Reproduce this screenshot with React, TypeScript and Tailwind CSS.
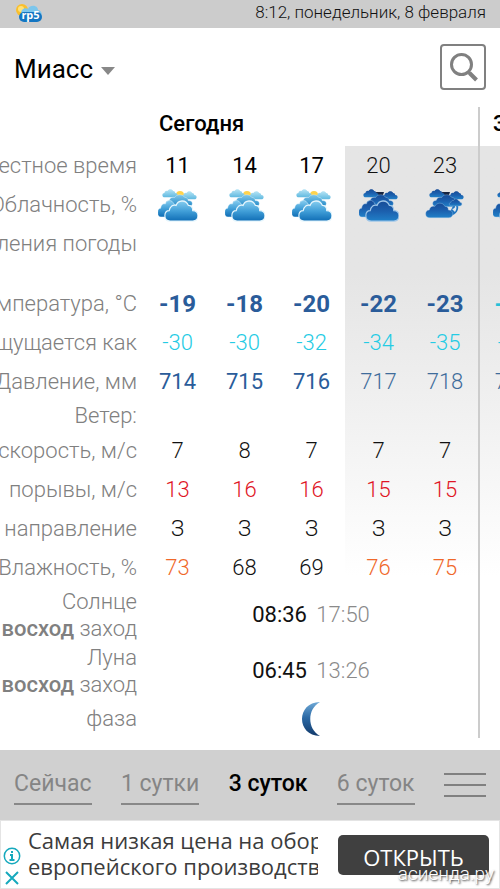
import React from "react";

type Tone = "black" | "bold" | "cyan" | "cyanBold" | "blue" | "slate" | "red" | "orange" | "medium";

const tones: Record<Tone, string> = {
  black: "text-[#111111]",
  medium: "text-black font-normal",
  bold: "text-[24px] text-[#2a5c9a] font-bold",
  cyanBold: "text-[24px] text-[#27c0d8] font-bold",
  cyan: "text-[#25cbe4] font-light",
  blue: "text-[#2a5c9a] font-normal",
  slate: "text-[#3f6c9b] font-light",
  red: "text-[#e01525] font-light",
  orange: "text-[#f0682a] font-light",
};

type Cell = [string, Tone];

const each = (values: string[], tone: Tone): Cell[] => values.map((v) => [v, tone]);

const hours = each(["11", "14", "17"], "medium").concat(each(["20", "23", "02"], "black"));
const temperature = each(["-19", "-18", "-20", "-22", "-23"], "bold").concat(each(["-24"], "cyanBold"));
const feels = each(["-30", "-30", "-32", "-34", "-35", "-35"], "cyan");
const pressure = each(["714", "715", "716"], "blue").concat(each(["717", "718", "719"], "slate"));
const speed = each(["7", "8", "7", "7", "7", ""], "black");
const gusts = each(["13", "16", "16", "15", "15", ""], "red");
const direction = each(["З", "З", "З", "З", "З", ""], "black");
const humidity: Cell[] = [
  ["73", "orange"],
  ["68", "black"],
  ["69", "black"],
  ["76", "orange"],
  ["75", "orange"],
  ["", "orange"],
];

const cloudPath =
  "M7 22C3 22 1 20 1 17C1 14 3 12 6 12C7 8 10 6 14 7C16 2 25 1 28 7C31 7 33 9 33 12C37 12 39 14 39 17C39 20 37 22 33 22Z";

function Clouds({ kind }: { kind: "day" | "night" | "clearing" }) {
  const night = kind !== "day";
  const back = night ? "url(#cloudNight)" : "url(#cloudPale)";
  const middle = night ? "url(#cloudNight)" : "url(#cloudMid)";
  const front = night ? "url(#cloudNight)" : "url(#cloudDay)";
  const edge = night ? "#9fc6e8" : "#e6f6fd";
  return (
    <svg viewBox="0 0 40 36" className="mx-auto block h-9 w-10" role="img" aria-label="Облачно">
      {night ? (
        <path d="M17 5h8l-2 6h-5z" fill="#172440" />
      ) : (
        <circle cx="22" cy="8" r="4" fill="#ffd34d" />
      )}
      <path d={cloudPath} transform="translate(4 1) scale(.4 .42)" fill={back} />
      <path d={cloudPath} transform="translate(23 3) scale(.4 .42)" fill={back} />
      <path d={cloudPath} transform="translate(7 6) scale(.7 .62)" fill={middle} stroke={edge} strokeWidth=".6" />
      {kind === "clearing" ? (
        <>
          <path d="M25 29C32 27 34 23 33 17L29 17L24 27Z" fill="#1f74bf" />
          <path d="M27 22Q31 21 30 18Q33 20 30 25Z" fill="#dfe8ef" />
          <path d={cloudPath} transform="translate(24 11) scale(.33 .36)" fill={front} stroke={edge} strokeWidth="1" />
          <path d={cloudPath} transform="translate(0 14) scale(.71 .76)" fill={front} stroke={edge} strokeWidth=".5" />
        </>
      ) : (
        <>
          <path d={cloudPath} transform="translate(-1 11) scale(.6 .86)" fill={front} stroke={edge} strokeWidth=".6" />
          <path d={cloudPath} transform="translate(6 11) scale(.87 1.05)" fill={front} stroke={edge} strokeWidth="1.3" />
        </>
      )}
    </svg>
  );
}

function Gradients() {
  return (
    <svg className="absolute h-0 w-0" aria-hidden="true">
      <defs>
        <linearGradient id="cloudPale" x1="0" y1="0" x2="0" y2="1">
          <stop offset="0" stopColor="#b8e5f5" />
          <stop offset="1" stopColor="#5fb9e0" />
        </linearGradient>
        <linearGradient id="cloudMid" x1="0" y1="0" x2="0" y2="1">
          <stop offset="0" stopColor="#7fc6e8" />
          <stop offset="1" stopColor="#2389c8" />
        </linearGradient>
        <linearGradient id="cloudDay" x1="0" y1="0" x2="0" y2="1">
          <stop offset="0" stopColor="#86cdef" />
          <stop offset=".5" stopColor="#419fd8" />
          <stop offset="1" stopColor="#0f6db5" />
        </linearGradient>
        <linearGradient id="cloudNight" x1="0" y1="0" x2="0" y2="1">
          <stop offset="0" stopColor="#174c97" />
          <stop offset=".5" stopColor="#1c5fad" />
          <stop offset="1" stopColor="#2080c8" />
        </linearGradient>
        <linearGradient id="moonBlue" x1="0" y1="0" x2="0" y2="1">
          <stop offset="0" stopColor="#6fa9d6" />
          <stop offset=".45" stopColor="#2c6aa6" />
          <stop offset="1" stopColor="#123a6b" />
        </linearGradient>
      </defs>
    </svg>
  );
}

function RowLabel({ children }: { children: React.ReactNode }) {
  return (
    <th scope="row" className="p-0 pr-[7px] font-light text-[#808080]">
      <div className="flex justify-end overflow-hidden whitespace-nowrap">
        <span>{children}</span>
      </div>
    </th>
  );
}

const nextDay = "border-l-2 border-[#cccccc]";

function Row({ label, cells }: { label: string; cells: Cell[] }) {
  return (
    <tr className="h-[39px]">
      <RowLabel>{label}</RowLabel>
      {cells.map(([text, tone], i) => (
        <td key={i} className={`p-0 text-center ${tones[tone]} ${i === 5 ? nextDay : ""}`}>
          {text}
        </td>
      ))}
    </tr>
  );
}

function RiseSet({ label, rise, set }: { label: string; rise: string; set: string }) {
  return (
    <tr className="h-14">
      <RowLabel>
        <span className="block text-right leading-[27px]">{label}</span>
        <span className="block leading-[27px]">
          <b className="font-medium">восход</b> заход
        </span>
      </RowLabel>
      <td colSpan={5} className="p-0 text-center text-[#111111]">
        <span className="font-normal">{rise}</span> <span className="ml-1 font-light text-[#8a8a8a]">{set}</span>
      </td>
      <td className={nextDay} />
    </tr>
  );
}

function Forecast() {
  return (
    <div className="overflow-hidden">
      <table className="w-[546px] table-fixed border-collapse text-[22px] leading-[28px] font-light">
        <colgroup>
          <col className="w-36" />
          <col span={6} />
        </colgroup>
        <thead>
          <tr className="h-[39px] text-left text-black">
            <td />
            <th scope="colgroup" colSpan={5} className="p-0 pb-[6px] pl-[15px] font-medium">
              Сегодня
            </th>
            <th scope="colgroup" className={`p-0 pb-[6px] pl-[13px] font-medium ${nextDay}`}>
              Завтра
            </th>
          </tr>
        </thead>
        <tbody className="bg-linear-to-b from-[#e5e5e5] from-30% to-white bg-[length:201px_430px] bg-right-top bg-no-repeat">
          <Row label="Местное время" cells={hours} />
          <tr className="h-[39px]">
            <RowLabel>Облачность, %</RowLabel>
            <td className="p-0"><Clouds kind="day" /></td>
            <td className="p-0"><Clouds kind="day" /></td>
            <td className="p-0"><Clouds kind="day" /></td>
            <td className="p-0"><Clouds kind="night" /></td>
            <td className="p-0"><Clouds kind="clearing" /></td>
            <td className={`p-0 ${nextDay}`}><Clouds kind="night" /></td>
          </tr>
          <tr className="h-[60px] align-top">
            <th scope="row" className="p-0 pt-[6px] pr-[7px] font-light text-[#808080]">
              <div className="flex justify-end overflow-hidden whitespace-nowrap">
                <span>Явления погоды</span>
              </div>
            </th>
            <td colSpan={5} />
            <td className={nextDay} />
          </tr>
          <Row label="Температура, °C" cells={temperature} />
          <Row label="Ощущается как" cells={feels} />
          <Row label="Давление, мм" cells={pressure} />
          <tr className="h-[30px]">
            <RowLabel>Ветер:</RowLabel>
            <td colSpan={5} />
            <td className={nextDay} />
          </tr>
          <Row label="скорость, м/с" cells={speed} />
          <Row label="порывы, м/с" cells={gusts} />
          <Row label="направление" cells={direction} />
          <Row label="Влажность, %" cells={humidity} />
          <RiseSet label="Солнце" rise="08:36" set="17:50" />
          <RiseSet label="Луна" rise="06:45" set="13:26" />
          <tr className="h-[39px]">
            <RowLabel>фаза</RowLabel>
            <td colSpan={5} className="p-0">
              <svg viewBox="0 0 20 36" className="mx-auto block h-9 w-5" role="img" aria-label="Убывающая луна">
                <path d="M19 1C-5 1-5 35 19 35C6 28 6 8 19 1Z" fill="url(#moonBlue)" />
              </svg>
            </td>
            <td className={nextDay} />
          </tr>
        </tbody>
      </table>
    </div>
  );
}

function Logo() {
  return (
    <svg viewBox="0 0 28 20" className="h-5 w-7" role="img" aria-label="rp5">
      <circle cx="7" cy="7" r="6" fill="#f9bf2d" />
      <circle cx="6" cy="6" r="3" fill="#ffe27a" />
      <path d="M7 12C4 6 11 4 13 6C15 1 23 2 23 7C28 8 27 13 25 14L8 14Z" fill="#7cc6ec" />
      <rect x="4" y="9" width="23" height="10" rx="5" fill="#1476c2" />
      <text x="15.500" y="16" textAnchor="middle" className="fill-white font-['Open_Sans',sans-serif] text-[11px] font-bold">
        rp5
      </text>
    </svg>
  );
}

const tabs = ["Сейчас", "1 сутки", "3 суток", "6 суток"];

export default function App() {
  return (
    <div className="relative flex min-h-screen flex-col overflow-hidden bg-white font-['Roboto',sans-serif]">
      <Gradients />
      <div className="flex h-7 items-center justify-between bg-[#cccccc] pr-[14px] pb-[2px] pl-[15px]">
        <Logo />
        <span className="text-[17px] font-light text-[#111111]">8:12, понедельник, 8 февраля</span>
      </div>

      <header className="flex items-center justify-between px-[14px] pt-4 pb-[17px]">
        <div className="flex items-center gap-2 pt-1">
          <select aria-label="Город" className="field-sizing-content appearance-none bg-transparent text-[26px] leading-9 text-black">
            <option>Миасс</option>
          </select>
          <svg viewBox="0 0 14 8" className="mt-1 h-2 w-[14px]" aria-hidden="true">
            <path d="M0 0h14L7 8z" fill="#888888" />
          </svg>
        </div>
        <button aria-label="Поиск" className="flex h-[46px] w-[46px] items-center justify-center rounded-[4px] border-2 border-[#808080]">
          <svg viewBox="0 0 30 30" className="h-[30px] w-[30px]" fill="none" stroke="#808080">
            <circle cx="13.500" cy="12.500" r="10" strokeWidth="3" />
            <path d="M20 19.500L23 22.500" strokeWidth="3" />
            <path d="M21.500 21L28.500 28" strokeWidth="4" />
          </svg>
        </button>
      </header>

      <main>
        <Forecast />
      </main>

      <nav className="mt-auto flex h-[70px] items-center justify-between bg-[#d0d0d0] px-[14px]">
        {tabs.map((tab) => (
          <button
            key={tab}
            className={
              tab === "3 суток"
                ? "border-b-2 border-transparent pt-1 pb-1 text-[23px] leading-[30px] font-medium text-black"
                : "border-b-2 border-[#888888] pt-1 pb-1 text-[23px] leading-[30px] text-[#858585]"
            }
          >
            {tab}
          </button>
        ))}
        <button aria-label="Меню" className="flex w-[42px] flex-col gap-[9px]">
          <span className="h-[2px] w-full bg-[#808080]" />
          <span className="h-[2px] w-full bg-[#808080]" />
          <span className="h-[2px] w-full bg-[#808080]" />
        </button>
      </nav>

      <aside className="flex h-[69px] items-center border border-[#e4e4e4] bg-white pr-[10px] pl-[2px]">
        <div className="flex flex-col items-center gap-1 pt-6">
          <a href="#info" aria-label="О рекламе">
            <svg viewBox="0 0 18 18" className="h-[18px] w-[18px]" fill="none" stroke="#16a9bd" strokeWidth="1.500">
              <circle cx="9" cy="9" r="7.700" />
              <path d="M7 8h2v5M6.500 13h5M9 4v2" strokeWidth="2" />
            </svg>
          </a>
          <button aria-label="Закрыть">
            <svg viewBox="0 0 18 18" className="h-[18px] w-[18px]" stroke="#16a9bd" strokeWidth="2">
              <path d="M3 3l12 12M15 3L3 15" />
            </svg>
          </button>
        </div>
        <p className="ml-[7px] min-w-0 flex-1 overflow-hidden pb-[3px] font-['Open_Sans',sans-serif] text-[22px] leading-[26px] whitespace-nowrap text-[#3c3c3c]">
          Самая низкая цена на оборудование
          <br />
          европейского производства
        </p>
        <button className="ml-5 h-10 w-[151px] rounded-[5px] bg-[#404040] pt-1 font-['Open_Sans',sans-serif] text-[22px] leading-7 font-medium text-white">
          ОТКРЫТЬ
        </button>
      </aside>
      <span className="absolute right-[6px] bottom-0 text-[19px] leading-[30px] font-light text-white [text-shadow:1px_1px_2px_#333333]">
        асиенда.ру
      </span>
    </div>
  );
}
